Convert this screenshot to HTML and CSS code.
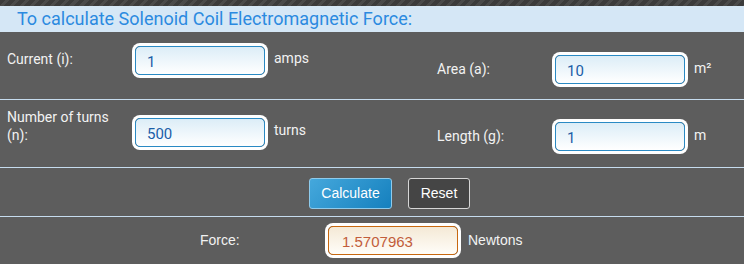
FILE: index.html
```html
<!DOCTYPE html>
<html>
<head>
	<meta charset="utf-8">
	<title>Solenoid Coil Electromagnetic Force</title>
	<link rel="stylesheet" href="styles.css">
</head>
<body>
	<div class="stripes"></div>
	<div class="cHeader">To calculate Solenoid Coil Electromagnetic Force:</div>
	<div class="calc">
		<div class="row row1">
			<div class="group gLeft">
				<label class="lbl">Current (i):</label>
				<input class="inp" type="text" value="1">
				<span class="unit">amps</span>
			</div>
			<div class="group gRight">
				<label class="lbl lbl2">Area (a):</label>
				<input class="inp" type="text" value="10">
				<span class="unit sup">m²</span>
			</div>
		</div>
		<div class="row row2">
			<div class="group gLeft">
				<label class="lbl twoLine">Number of turns (n):</label>
				<input class="inp" type="text" value="500">
				<span class="unit">turns</span>
			</div>
			<div class="group gRight">
				<label class="lbl lbl2">Length (g):</label>
				<input class="inp" type="text" value="1">
				<span class="unit">m</span>
			</div>
		</div>
		<div class="row btnRow">
			<input class="btn btnCalc" type="button" value="Calculate">
			<input class="btn btnReset" type="button" value="Reset">
		</div>
		<div class="row resRow">
			<label class="resLbl">Force:</label>
			<input class="inp out" type="text" value="1.5707963">
			<span class="resUnit">Newtons</span>
		</div>
	</div>
</body>
</html>
```

FILE: styles.css
```css
body{margin: 0;padding: 0;background-color: #5d5d5d;font-family: Roboto, "Liberation Sans", sans-serif;}
.stripes{
	height: 6px;
	background: repeating-linear-gradient(135deg, #3b3b3b 0, #3b3b3b 4px, #4a4a4a 4px, #4a4a4a 7px);
}
.cHeader{
	height: 26px;
	line-height: 26px;
	background-color: #d5e7f6;
	color: #2b8ae0;
	font-size: 18px;
	padding-left: 17px;
}
.row{
	display: flex;
	align-items: flex-start;
	border-bottom: 1px solid #c6dcee;
	box-sizing: border-box;
}
.row1{height: 68px;}
.row2{height: 68px;}
.group{
	display: flex;
	align-items: center;
	height: 29px;
}
.gLeft{padding-left: 7px;width: 430px;}
.row1 .gLeft{margin-top: 14px;}
.row1 .gRight{margin-top: 23px;}
.row2 .gLeft{margin-top: 18px;}
.row2 .gRight{margin-top: 22px;}
.lbl{
	width: 128px;
	color: #f2f2f2;
	font-size: 14px;
	line-height: 17px;
	margin-top: -3px;
}
.lbl2{width: 118px;margin-top: 0;}
.twoLine{align-self: flex-start;margin-top: -10px;width: 120px;margin-right: 8px;line-height: 18px;}
.inp{
	width: 130px;
	height: 29px;
	box-sizing: border-box;
	border: 1px solid #2a8ac4;
	border-radius: 5px;
	box-shadow: 0 0 0 3px #fff;
	background: linear-gradient(#dcedf7, #ffffff);
	color: #1b5ea8;
	font-family: Roboto, "Liberation Sans", sans-serif;
	font-size: 15px;
	padding: 2px 0 0 11px;
	outline: 0;
}
.unit{
	color: #f2f2f2;
	font-size: 14px;
	margin-left: 9px;
	margin-top: -6px;
}
.sup{margin-top: -8px;}
.gRight .unit{margin-top: -4px;}
.btnRow{
	height: 49px;
	align-items: center;
	padding-left: 309px;
	gap: 16px;
	padding-top: 2px;
}
.btn{
	height: 31px;
	border-radius: 3px;
	font-family: "Liberation Sans", Arial, sans-serif;
	font-size: 14px;
	color: #fff;
	cursor: pointer;
	outline: 0;
}
.btnCalc{
	width: 83px;
	border: 1px solid #8ecbec;
	background: linear-gradient(135deg, #45a8dc, #1580be);
}
.btnReset{
	width: 62px;
	border: 1px solid #d6d6d6;
	background-color: #454545;
}
.resRow{
	border-bottom: 0;
	height: 47px;
	align-items: center;
	padding-bottom: 1px;
}
.resLbl{
	width: 128px;
	padding-left: 200px;
	color: #f2f2f2;
	font-family: "Liberation Sans", Arial, sans-serif;
	font-size: 14px;
}
.out{
	border-color: #c8680f;
	background: linear-gradient(#f4e9d6, #fffdf8);
	color: #c25d3b;
	font-family: "Liberation Sans", Arial, sans-serif;
	padding-left: 13px;
}
.resUnit{
	color: #f2f2f2;
	font-family: "Liberation Sans", Arial, sans-serif;
	font-size: 14px;
	margin-left: 10px;
}
```
